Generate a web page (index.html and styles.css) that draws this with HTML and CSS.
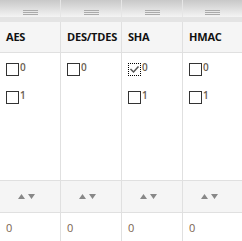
FILE: index.html
```html
<!DOCTYPE html>
<html lang="en">
<head>
    <meta charset="UTF-8">
    <title>Algorithms</title>
    <link rel="stylesheet" href="styles.css">
</head>
<body>

<div class="grid">
    <div class="row grips">
        <div class="cell"><span class="grip"></span></div>
        <div class="cell"><span class="grip"></span></div>
        <div class="cell"><span class="grip"></span></div>
        <div class="cell"><span class="grip"></span></div>
    </div>
    <div class="band"></div>
    <div class="row head">
        <div class="cell">AES</div>
        <div class="cell">DES/TDES</div>
        <div class="cell">SHA</div>
        <div class="cell">HMAC</div>
    </div>
    <div class="row body">
        <div class="cell">
            <label class="opt"><span class="box"></span><span class="num">0</span></label>
            <label class="opt"><span class="box"></span><span class="num">1</span></label>
        </div>
        <div class="cell">
            <label class="opt"><span class="box"></span><span class="num">0</span></label>
        </div>
        <div class="cell">
            <label class="opt"><span class="box checked">
                <svg width="11" height="11" viewBox="0 0 11 11"><path d="M1.5 5 L4.5 8 L9.5 2.5" fill="none" stroke="#555" stroke-width="1.5"/></svg>
            </span><span class="num">0</span></label>
            <label class="opt"><span class="box"></span><span class="num">1</span></label>
        </div>
        <div class="cell">
            <label class="opt"><span class="box"></span><span class="num">0</span></label>
            <label class="opt"><span class="box"></span><span class="num">1</span></label>
        </div>
    </div>
    <div class="row sort">
        <div class="cell"><svg class="arrows" width="17" height="5" viewBox="0 0 17 5"><path d="M0 5 L3.5 0 L7 5 Z M10 0 L17 0 L13.5 5 Z" fill="#888"/></svg></div>
        <div class="cell"><svg class="arrows" width="17" height="5" viewBox="0 0 17 5"><path d="M0 5 L3.5 0 L7 5 Z M10 0 L17 0 L13.5 5 Z" fill="#888"/></svg></div>
        <div class="cell"><svg class="arrows" width="17" height="5" viewBox="0 0 17 5"><path d="M0 5 L3.5 0 L7 5 Z M10 0 L17 0 L13.5 5 Z" fill="#888"/></svg></div>
        <div class="cell"><svg class="arrows" width="17" height="5" viewBox="0 0 17 5"><path d="M0 5 L3.5 0 L7 5 Z M10 0 L17 0 L13.5 5 Z" fill="#888"/></svg></div>
    </div>
    <div class="row vals">
        <div class="cell">0</div>
        <div class="cell">0</div>
        <div class="cell">0</div>
        <div class="cell">0</div>
    </div>
</div>

</body>
</html>
```

FILE: styles.css
```css
body { margin: 0; font-family: "Open Sans", Arial, sans-serif; background: white; }
.grid { width: 242px; }
.row { display: grid; grid-template-columns: 61px 61px 61px 1fr; }
.cell { border-right: 1px solid #e0e0e0; box-sizing: border-box; }
.cell:last-child { border-right: none; }
.grips { height: 17px; background: linear-gradient(#c8c8c8, #f4f4f4); }
.grips .cell { border-right-color: #e6e6e6; display: flex; justify-content: center; align-items: flex-start; }
.grip { width: 15px; height: 5px; margin-top: 10px; border-top: 1px solid #aaa; border-bottom: 1px solid #aaa; box-sizing: border-box; background: linear-gradient(transparent 1px, #aaa 1px, #aaa 2px, transparent 2px); }
.band { height: 5px; background: #e4e4e4; }
.head { height: 30px; background: #f5f5f5; border-bottom: 1px solid #e0e0e0; }
.head .cell { padding: 7px 0 0 6px; font-size: 11px; font-weight: bold; color: #111; letter-spacing: -0.2px; }
.body { height: 127px; border-bottom: 1px solid #e0e0e0; }
.body .cell { padding: 10px 0 0 6px; display: flex; flex-direction: column; gap: 15px; }
.opt { display: flex; align-items: flex-start; }
.box { width: 13px; height: 13px; border: 1px solid #333; box-sizing: border-box; display: flex; align-items: center; justify-content: center; }
.box.checked { border: 1px dotted #000; }
.num { font-size: 10px; line-height: 8px; color: #6b5e52; font-weight: 600; margin-left: 1px; }
.sort { height: 31px; background: #f5f5f5; border-bottom: 1px solid #e0e0e0; }
.sort .cell { display: flex; align-items: center; padding-left: 18px; }
.arrows { display: block; }
.vals { height: 30px; border-bottom: 1px solid #e0e0e0; }
.vals .cell { padding: 7px 0 0 6px; font-size: 11px; color: #7a6450; }
```
